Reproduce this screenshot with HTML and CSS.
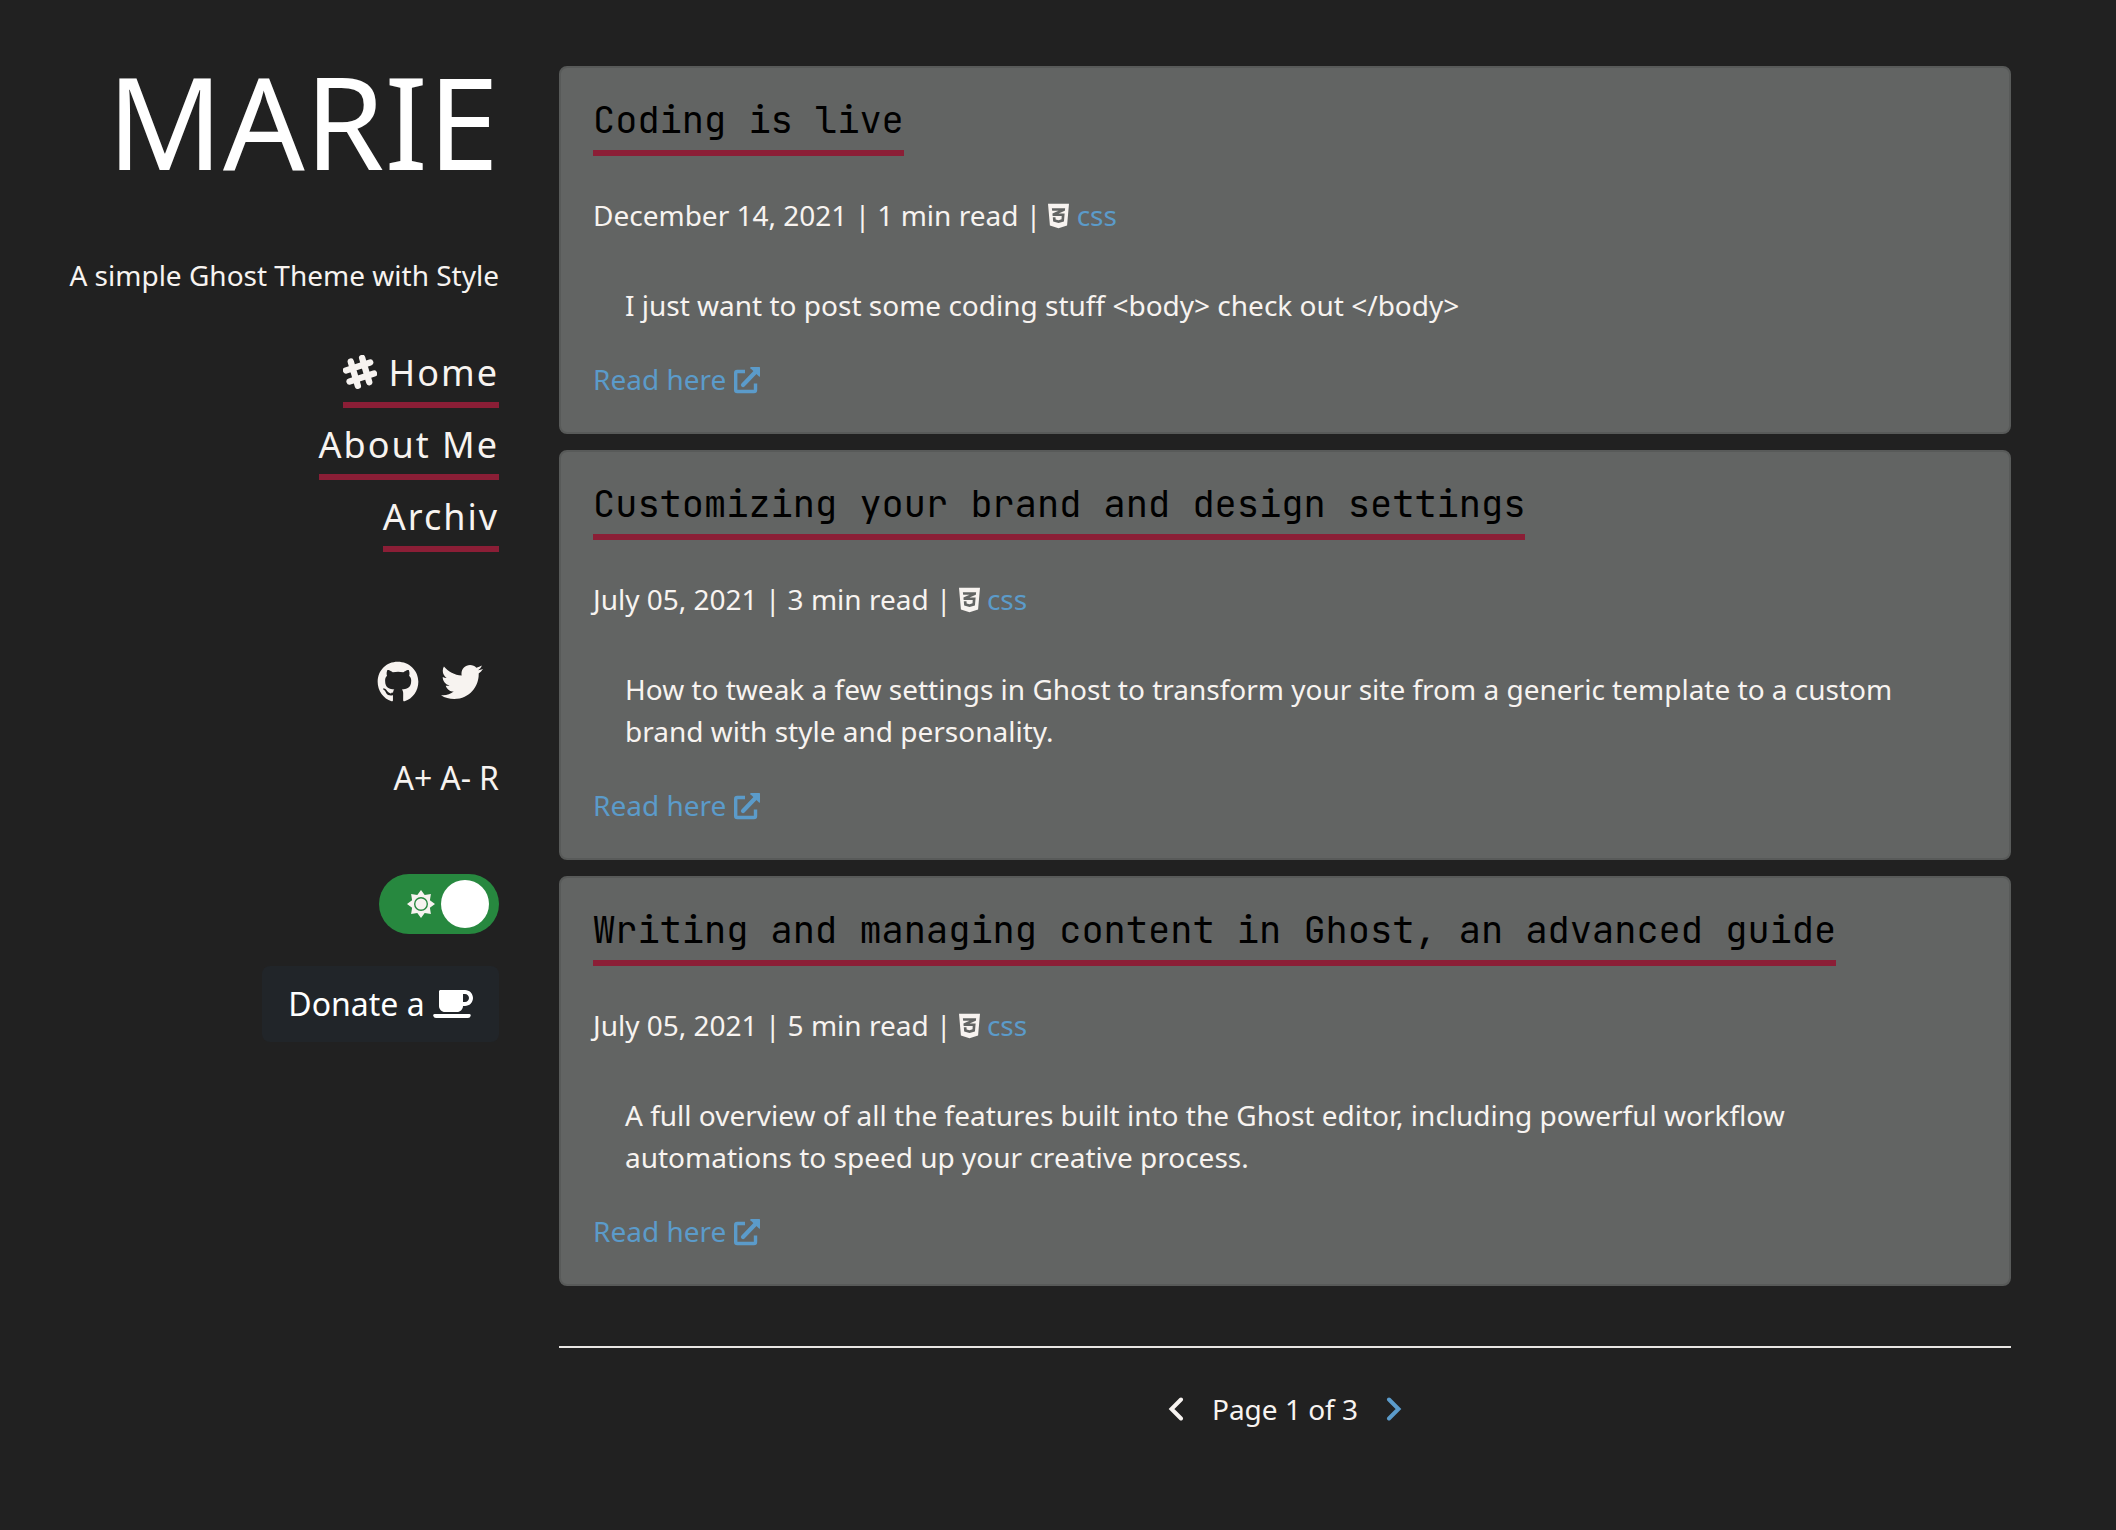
FILE: index.html
```html
<!DOCTYPE html>
<html lang="en">
<head>
<meta charset="utf-8">
<meta name="viewport" content="width=device-width, initial-scale=1">
<title>MARIE</title>
<link rel="stylesheet" href="styles.css">
</head>
<body>
<svg class="sprite" aria-hidden="true">
  <symbol id="css3" viewBox="0 0 384 512"><path d="M0 32l34.9 395.8L192 480l157.1-52.2L384 32H0zm313.1 80l-4.8 47.3L193 208.6l-.3.1h111.5l-12.8 146.6-98.2 28.7-98.8-29.2-6.4-73.9h48.9l3.2 38.3 52.6 13.3 54.7-15.4 3.7-61.6-166.3-.5v-.1l-.2.1-3.6-46.3L193.1 162l6.5-2.7H76.7L70.9 112h242.2z"/></symbol>
  <symbol id="external" viewBox="0 0 26 28"><path d="M11 5.500H3.200Q1.700 5.500 1.700 7V24Q1.700 25.500 3.200 25.500H20Q21.500 25.500 21.500 24V17.500" fill="none" stroke="currentColor" stroke-width="3.400"/><path d="M9 19L21 6.500" fill="none" stroke="currentColor" stroke-width="4.200" stroke-linecap="round"/><path d="M17 1H25.500Q26 1 26 1.500V10Q26 11 25 10.400L16.400 2.200Q15.800 1 17 1z"/></symbol>
</svg>
<div class="layout">
  <aside class="sidebar">
    <h1 class="brand">MARIE</h1>
    <p class="tagline">A simple Ghost Theme with Style</p>
    <nav class="nav" aria-label="Main">
      <a class="nav-link" href="#home"><svg class="hash" viewBox="0 0 32 32" aria-hidden="true"><path d="M7.300 6.200L14 29M18 2.800L24.700 25.600M2.800 14.500L25.600 7M6.200 25L29.200 17.500"/></svg> Home</a>
      <a class="nav-link" href="#about">About Me</a>
      <a class="nav-link" href="#archiv">Archiv</a>
    </nav>
    <div class="social">
      <a href="#github" aria-label="GitHub"><svg class="social-icon" viewBox="0 0 496 512"><path d="M165.900 397.400c0 2-2.300 3.600-5.200 3.600-3.300.3-5.600-1.300-5.600-3.600 0-2 2.300-3.600 5.200-3.600 3-.3 5.600 1.300 5.600 3.600zM244.800 8C106.100 8 0 113.300 0 252c0 110.900 69.800 205.800 169.500 239.200 12.800 2.300 17.300-5.600 17.300-12.100 0-6.200-.3-40.400-.3-61.400 0 0-70 15-84.700-29.800 0 0-11.400-29.100-27.800-36.600 0 0-22.900-15.700 1.600-15.400 0 0 24.900 2 38.600 25.800 21.900 38.600 58.600 27.500 72.900 20.900 2.300-16 8.800-27.100 16-33.700-55.900-6.200-112.300-14.300-112.300-110.500 0-27.500 7.600-41.300 23.600-58.900-2.600-6.500-11.100-33.300 2.600-67.900 20.900-6.500 69 27 69 27 20-5.600 41.500-8.500 62.800-8.500s42.800 2.900 62.800 8.500c0 0 48.100-33.600 69-27 13.700 34.700 5.200 61.400 2.600 67.900 16 17.700 25.800 31.500 25.800 58.900 0 96.500-58.900 104.200-114.800 110.500 9.200 7.900 17 22.900 17 46.400 0 33.700-.3 75.400-.3 83.600 0 6.500 4.600 14.400 17.300 12.100C428.200 457.800 496 362.900 496 252 496 113.300 383.500 8 244.800 8z"/></svg></a>
      <a href="#twitter" aria-label="Twitter"><svg class="social-icon" viewBox="0 0 512 512"><path d="M459.370 151.716c.325 4.548.325 9.097.325 13.645 0 138.720-105.583 298.558-298.558 298.558-59.452 0-114.680-17.219-161.137-47.106 8.447.974 16.568 1.299 25.340 1.299 49.055 0 94.213-16.568 130.274-44.832-46.132-.975-84.792-31.188-98.112-72.772 6.498.974 12.995 1.624 19.818 1.624 9.421 0 18.843-1.300 27.614-3.573-48.081-9.747-84.143-51.980-84.143-102.985v-1.299c13.969 7.797 30.214 12.670 47.431 13.319-28.264-18.843-46.781-51.005-46.781-87.391 0-19.492 5.197-37.360 14.294-52.954 51.655 63.675 129.300 105.258 216.365 109.807-1.624-7.797-2.599-15.918-2.599-24.040 0-57.828 46.782-104.934 104.934-104.934 30.213 0 57.502 12.670 76.670 33.137 23.715-4.548 46.456-13.320 66.599-25.340-7.798 24.366-24.366 44.833-46.132 57.827 21.117-2.273 41.584-8.122 60.426-16.243-14.292 20.791-32.161 39.308-52.628 54.253z"/></svg></a>
    </div>
    <div class="sizer">
      <button type="button" aria-label="Larger text">A+</button>
      <button type="button" aria-label="Smaller text">A-</button>
      <button type="button" aria-label="Reset text size">R</button>
    </div>
    <label class="toggle">
      <input type="checkbox" checked aria-label="Dark mode">
      <svg class="sun" viewBox="-14 -14 28 28" aria-hidden="true"><path d="M0-14L3.700-8.900L9.900-9.900L8.900-3.700L14 0L8.900 3.700L9.900 9.900L3.700 8.900L0 14L-3.700 8.900L-9.900 9.900L-8.900 3.700L-14 0L-8.900-3.700L-9.900-9.900L-3.700-8.900z"/><circle r="6.300"/></svg>
      <span class="knob"></span>
    </label>
    <button class="donate" type="button">Donate a <svg class="cup" viewBox="0 0 640 512" aria-hidden="true"><path d="M192 384h192c53 0 96-43 96-96h32c70.600 0 128-57.400 128-128S582.600 32 512 32H120c-13.300 0-24 10.700-24 24v232c0 53 43 96 96 96zM512 96c35.300 0 64 28.700 64 64s-28.700 64-64 64h-32V96h32zM24 416H584Q608 416 604 440Q598 480 560 480H48Q10 480 2 440Q0 416 24 416z"/></svg></button>
  </aside>
  <main class="main">
    <article class="card">
      <h2 class="title"><a href="#post-1">Coding is live</a></h2>
      <p class="meta">December 14, 2021 | 1 min read | <svg class="tag-icon" aria-hidden="true"><use href="#css3"/></svg> <a href="#css">css</a></p>
      <p class="excerpt">I just want to post some coding stuff &lt;body&gt; check out &lt;/body&gt;</p>
      <a class="more" href="#post-1">Read here <svg class="more-icon" aria-hidden="true"><use href="#external"/></svg></a>
    </article>
    <article class="card">
      <h2 class="title"><a href="#post-2">Customizing your brand and design settings</a></h2>
      <p class="meta">July 05, 2021 | 3 min read | <svg class="tag-icon" aria-hidden="true"><use href="#css3"/></svg> <a href="#css">css</a></p>
      <p class="excerpt">How to tweak a few settings in Ghost to transform your site from a generic template to a custom brand with style and personality.</p>
      <a class="more" href="#post-2">Read here <svg class="more-icon" aria-hidden="true"><use href="#external"/></svg></a>
    </article>
    <article class="card">
      <h2 class="title"><a href="#post-3">Writing and managing content in Ghost, an advanced guide</a></h2>
      <p class="meta">July 05, 2021 | 5 min read | <svg class="tag-icon" aria-hidden="true"><use href="#css3"/></svg> <a href="#css">css</a></p>
      <p class="excerpt">A full overview of all the features built into the Ghost editor, including powerful workflow automations to speed up your creative process.</p>
      <a class="more" href="#post-3">Read here <svg class="more-icon" aria-hidden="true"><use href="#external"/></svg></a>
    </article>
    <nav class="pagination" aria-label="Pages">
      <svg class="chevron" viewBox="0 0 16 24" aria-hidden="true"><path d="M13 2.500L3.500 12L13 21.500"/></svg>
      <span>Page 1 of 3</span>
      <a href="#page-2" aria-label="Next page"><svg class="chevron" viewBox="0 0 16 24"><path d="M3 2.500L12.500 12L3 21.500"/></svg></a>
    </nav>
  </main>
</div>
</body>
</html>
```
FILE: styles.css
```css
* { box-sizing: border-box; }

body {
  margin: 0;
  background: #212121;
  color: #f7f3f0;
  font: 28px/42px "Noto Sans", sans-serif;
}

h1, h2, p { margin: 0; font-weight: 400; }
a { color: #5b9bca; text-decoration: none; }
svg { fill: currentColor; }
button { font: inherit; color: inherit; border: 0; background: none; padding: 0; }
.sprite { position: absolute; width: 0; height: 0; }

.layout {
  display: grid;
  grid-template-columns: 439px 1fr;
  gap: 60px;
  padding: 66px 105px 66px 60px;
}

.sidebar { display: flex; flex-direction: column; align-items: flex-end; }
.brand { color: #fff; font-size: 128px; line-height: 110px; }
.tagline { margin-top: 78px; white-space: nowrap; }

.nav {
  display: flex;
  flex-direction: column;
  align-items: flex-end;
  gap: 12px;
  margin-top: 52px;
}
.nav-link {
  padding-bottom: 4px;
  color: inherit;
  font-size: 36px;
  line-height: 50px;
  letter-spacing: 2px;
  border-bottom: 6px solid #8b1e36;
}
.hash {
  width: 34px;
  height: 34px;
  vertical-align: -3px;
  fill: none;
  stroke: currentColor;
  stroke-width: 6;
  stroke-linecap: round;
}

.social { display: flex; gap: 22px; margin: 109px 16px 0 0; }
.social a { display: flex; color: inherit; }
.social-icon { width: 42px; height: 42px; }

.sizer { display: flex; gap: 8px; margin-top: 51px; font-size: 32px; line-height: 48px; }

.toggle {
  display: flex;
  align-items: center;
  justify-content: flex-end;
  gap: 6px;
  width: 120px;
  height: 60px;
  margin-top: 72px;
  padding-right: 10px;
  border-radius: 30px;
  background: #27883f;
}
.toggle input { position: absolute; opacity: 0; }
.sun { width: 28px; height: 28px; }
.sun circle { fill: none; stroke: #27883f; stroke-width: 1.4; }
.knob { width: 48px; height: 48px; border-radius: 50%; background: #fff; }

.donate {
  margin-top: 32px;
  padding: 14px 26px;
  border-radius: 8px;
  background: #212529;
  color: #fff;
  font-size: 32px;
  line-height: 48px;
}
.cup { width: 40px; height: 32px; vertical-align: -4px; }

.main { display: flex; flex-direction: column; gap: 16px; min-width: 0; }
.card {
  padding: 32px;
  border: 2px solid #585a59;
  border-radius: 8px;
  background: #626463;
}
.title { font: 37px/40px "JetBrains Mono", "DejaVu Sans Mono", monospace; }
.title a {
  display: inline-block;
  padding-bottom: 10px;
  border-bottom: 6px solid #8b1e36;
  color: #000;
}
.meta { margin-top: 38px; }
.tag-icon { width: 21px; height: 28px; vertical-align: -4px; }
.excerpt { margin: 48px 32px 32px; }
.more-icon { width: 26px; height: 28px; vertical-align: -4px; }

.pagination {
  display: flex;
  align-items: center;
  justify-content: center;
  gap: 28px;
  margin-top: 44px;
  padding-top: 40px;
  border-top: 2px solid #e8e6e3;
}
.pagination a { display: flex; }
.chevron {
  width: 16px;
  height: 24px;
  fill: none;
  stroke: currentColor;
  stroke-width: 4;
  stroke-linecap: round;
}
```
